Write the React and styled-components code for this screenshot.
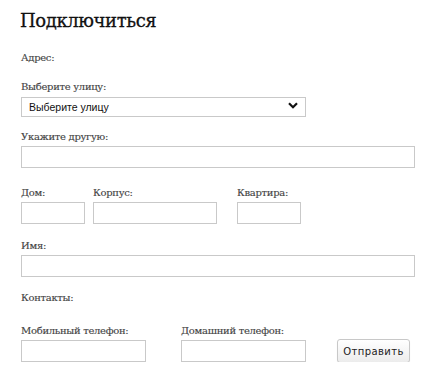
import React from "react";
import styled, { createGlobalStyle } from "styled-components";

const Global = createGlobalStyle`
  html, body { margin: 0; padding: 0; background: #fff; }
  body { font-family: "DejaVu Serif", "Liberation Serif", serif; }
`;

const Page = styled.form`
  padding: 8px 0 0 21px;
  width: 394px;
`;

const Title = styled.h1`
  margin: 0 0 0 -1px;
  font-family: "DejaVu Serif", serif;
  font-weight: normal;
  font-size: 18px;
  line-height: 26px;
  color: #111;
  letter-spacing: -0.4px;
  -webkit-text-stroke: 0.3px #111;
`;

const Section = styled.div`
  margin-top: ${(p) => p.$mt}px;
  font-size: 10px;
  line-height: 14px;
  color: #444;
  letter-spacing: -0.3px;
  -webkit-text-stroke: 0.15px #444;
`;

const Field = styled.div`
  display: flex;
  flex-direction: column;
  margin-top: ${(p) => p.$mt || 0}px;
`;

const Label = styled.label`
  font-size: 10px;
  line-height: 14px;
  color: #444;
  letter-spacing: -0.3px;
  -webkit-text-stroke: 0.15px #444;
  margin-bottom: 2px;
  white-space: nowrap;
`;

const Input = styled.input`
  box-sizing: border-box;
  width: ${(p) => p.$w}px;
  height: 22px;
  margin: 0;
  border: 1px solid #c9c9c9;
  background: #fff;
  outline: none;
`;

const SelectWrap = styled.div`
  position: relative;
  width: 285px;
  height: 20px;
`;

const Select = styled.select`
  box-sizing: border-box;
  width: 100%;
  height: 20px;
  margin: 0;
  padding: 0 0 0 7px;
  border: 1px solid #c9c9c9;
  background: #fff;
  appearance: none;
  font-family: "Liberation Sans", Arial, sans-serif;
  font-size: 10.5px;
  color: #111;
  outline: none;
`;

const Chevron = styled.svg`
  position: absolute;
  right: 8px;
  top: 6px;
  pointer-events: none;
`;

const Row = styled.div`
  display: grid;
  grid-template-columns: ${(p) => p.$cols};
  align-items: end;
  margin-top: ${(p) => p.$mt}px;
`;

const Button = styled.button`
  box-sizing: border-box;
  width: 73px;
  height: 24px;
  margin: 0 0 -1px 0;
  padding: 0;
  border: 1px solid #c8c8c8;
  border-radius: 3px;
  background: linear-gradient(#ffffff, #ececec);
  font-family: "DejaVu Sans", "Liberation Sans", sans-serif;
  font-size: 10px;
  letter-spacing: 0.4px;
  color: #222;
  box-shadow: 0 1px 1px rgba(0,0,0,0.08);
`;

export default function App() {
  return (
    <>
      <Global />
      <Page onSubmit={(e) => e.preventDefault()}>
        <Title>Подключиться</Title>
        <Section $mt={17}>Адрес:</Section>
        <Field $mt={15}>
          <Label>Выберите улицу:</Label>
          <SelectWrap>
            <Select defaultValue="">
              <option value="">Выберите улицу</option>
            </Select>
            <Chevron width="10" height="7" viewBox="0 0 10 7">
              <path d="M1 1.2 L5 5.2 L9 1.2" fill="none" stroke="#111" strokeWidth="2.2" />
            </Chevron>
          </SelectWrap>
        </Field>
        <Field $mt={14}>
          <Label>Укажите другую:</Label>
          <Input $w={394} />
        </Field>
        <Row $cols="72px 144px 64px" $mt={18}>
          <Field>
            <Label>Дом:</Label>
            <Input $w={64} />
          </Field>
          <Field>
            <Label>Корпус:</Label>
            <Input $w={124} />
          </Field>
          <Field>
            <Label>Квартира:</Label>
            <Input $w={64} />
          </Field>
        </Row>
        <Field $mt={15}>
          <Label>Имя:</Label>
          <Input $w={394} />
        </Field>
        <Section $mt={14}>Контакты:</Section>
        <Row $cols="160px 156px 73px" $mt={19}>
          <Field>
            <Label>Мобильный телефон:</Label>
            <Input $w={125} />
          </Field>
          <Field>
            <Label>Домашний телефон:</Label>
            <Input $w={125} />
          </Field>
          <Button type="submit">Отправить</Button>
        </Row>
      </Page>
    </>
  );
}
